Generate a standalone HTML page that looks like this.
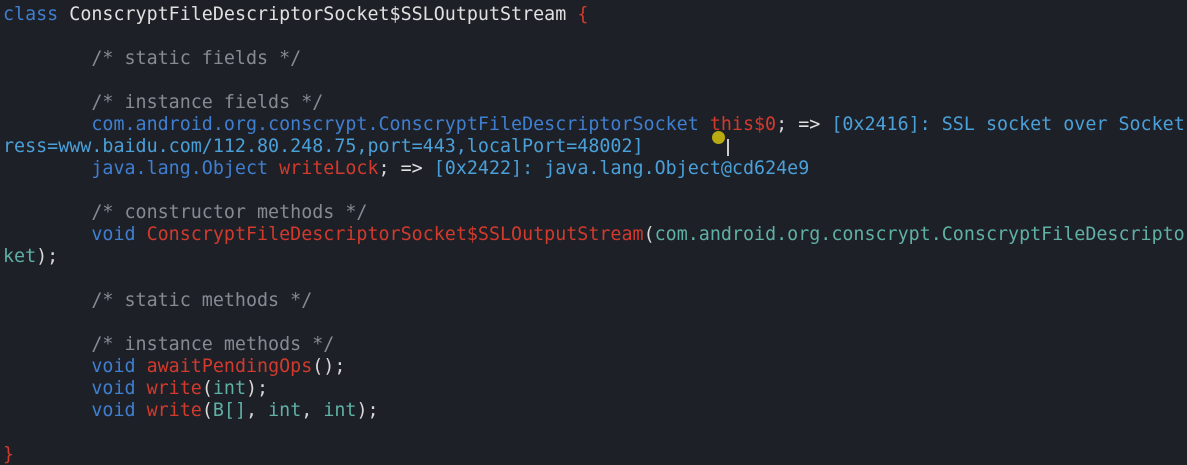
<!DOCTYPE html>
<html><head><meta charset="utf-8"><style>
html,body{margin:0;padding:0;background:#1e2028;width:1187px;height:465px;overflow:hidden}
pre{margin:0;padding:4px 0 0 3px;font-family:"DejaVu Sans Mono","Liberation Mono",monospace;font-size:18.35px;line-height:22px;color:#d8d8d8;white-space:pre}
.k{color:#3f7fd0}.c{color:#868b92}.r{color:#d23a2c}.t{color:#4aa0d8}.g{color:#5fb0a5}.w{color:#e0e0e0}
.dot{position:absolute;left:712px;top:131px;width:13px;height:13px;border-radius:50%;background:#b8aa10}
.ib{position:absolute;left:727px;top:139px;width:2px;height:17px;background:#ccc}
</style></head><body>
<pre><span class="k">class</span> <span class="w">ConscryptFileDescriptorSocket$SSLOutputStream</span> <span class="r">{</span>

        <span class="c">/* static fields */</span>

        <span class="c">/* instance fields */</span>
        <span class="k">com.android.org.conscrypt.ConscryptFileDescriptorSocket</span> <span class="r">this$0</span>; <span class="w">=&gt;</span> <span class="t">[0x2416]: SSL socket over Socket[add</span>
<span class="t">ress=www.baidu.com/112.80.248.75,port=443,localPort=48002]</span>
        <span class="k">java.lang.Object</span> <span class="r">writeLock</span>; <span class="w">=&gt;</span> <span class="t">[0x2422]: java.lang.Object@cd624e9</span>

        <span class="c">/* constructor methods */</span>
        <span class="k">void</span> <span class="r">ConscryptFileDescriptorSocket$SSLOutputStream</span>(<span class="g">com.android.org.conscrypt.ConscryptFileDescriptorSoc</span>
<span class="g">ket</span>);

        <span class="c">/* static methods */</span>

        <span class="c">/* instance methods */</span>
        <span class="k">void</span> <span class="r">awaitPendingOps</span>();
        <span class="k">void</span> <span class="r">write</span>(<span class="g">int</span>);
        <span class="k">void</span> <span class="r">write</span>(<span class="g">B[]</span>, <span class="g">int</span>, <span class="g">int</span>);

<span class="r">}</span></pre>
<div class="dot"></div><div class="ib"></div>
</body></html>
